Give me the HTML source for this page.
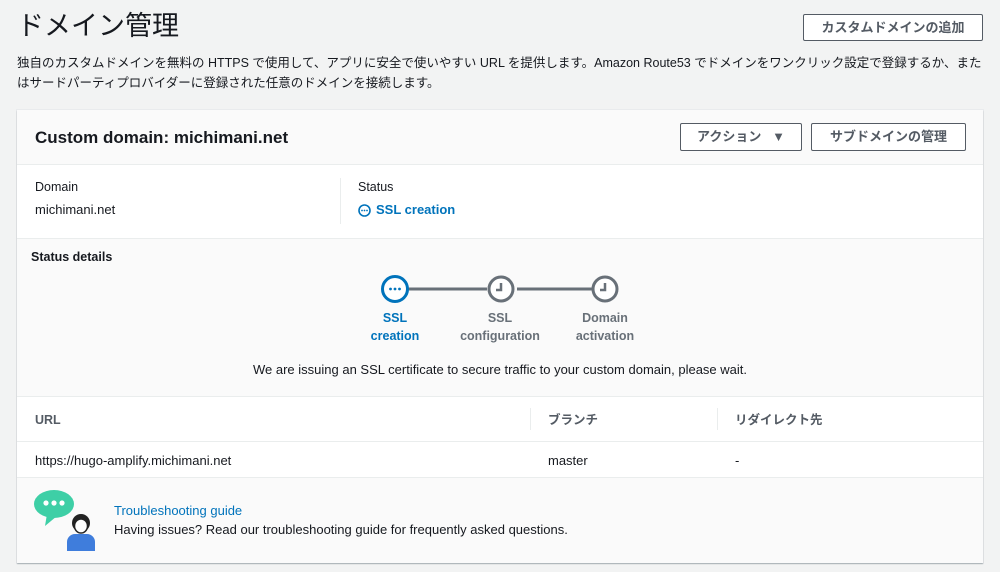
<!DOCTYPE html>
<html><head><meta charset="utf-8"><style>
*{box-sizing:border-box;margin:0;padding:0}
body{width:1000px;height:572px;background:#f2f3f3;font-family:"Liberation Sans","Noto Sans CJK JP",sans-serif;color:#16191f;position:relative;overflow:hidden}
.a{position:absolute}
.btn{position:absolute;border:1px solid #545b64;background:#fff;border-radius:2px;font-size:13px;font-weight:bold;color:#545b64;display:flex;align-items:center;justify-content:center;line-height:16px}
.t13{font-size:13px;line-height:16px}
.lbl{font-size:12.5px;color:#545b64;line-height:16px}
.th{font-size:12.5px;font-weight:bold;color:#545b64;line-height:16px;top:302px}
</style></head><body>
<div class="a" style="left:17px;top:8px;font-size:27px;line-height:36px;font-weight:400;color:#16191f">ドメイン管理</div>
<div class="btn" style="left:803px;top:14px;width:180px;height:27px">カスタムドメインの追加</div>
<div class="a" style="left:17px;top:53px;width:970px;font-size:12.5px;line-height:20px;color:#16191f">独自のカスタムドメインを無料の HTTPS で使用して、アプリに安全で使いやすい URL を提供します。Amazon Route53 でドメインをワンクリック設定で登録するか、またはサードパーティプロバイダーに登録された任意のドメインを接続します。</div>
<div class="a" style="left:17px;top:110px;width:966px;height:453px;background:#fff;box-shadow:0 1px 1px rgba(0,28,36,.3),0 0 0 1px #e9ebed">
 <div class="a" style="left:0;top:0;width:966px;height:55px;background:#fafafa;border-bottom:1px solid #eaeded"></div>
 <div class="a" style="left:18px;top:17px;font-size:17px;line-height:22px;font-weight:bold">Custom domain: michimani.net</div>
 <div class="btn" style="left:663px;top:13px;width:122px;height:28px">アクション&nbsp;&nbsp;&nbsp;▼</div>
 <div class="btn" style="left:794px;top:13px;width:155px;height:28px">サブドメインの管理</div>
 <div class="a lbl" style="left:18px;top:69px;color:#16191f">Domain</div>
 <div class="a t13" style="left:18px;top:92px">michimani.net</div>
 <div class="a" style="left:323px;top:68px;width:1px;height:46px;background:#eaeded"></div>
 <div class="a lbl" style="left:341px;top:69px;color:#16191f">Status</div>
 <div class="a t13" style="left:341px;top:92px;color:#0073bb;font-weight:bold;display:flex;align-items:center"><svg width="13" height="13" style="margin-right:5px"><circle cx="6.5" cy="6.5" r="5.5" fill="none" stroke="#0073bb" stroke-width="1.6"/><circle cx="4" cy="6.5" r=".9" fill="#0073bb"/><circle cx="6.5" cy="6.5" r=".9" fill="#0073bb"/><circle cx="9" cy="6.5" r=".9" fill="#0073bb"/></svg>SSL creation</div>
 <div class="a" style="left:0;top:128px;width:966px;height:159px;background:#fafafa;border-top:1px solid #eaeded;border-bottom:1px solid #eaeded"></div>
 <div class="a" style="left:14px;top:139px;font-size:12.5px;line-height:16px;font-weight:bold">Status details</div>
 <svg class="a" style="left:360px;top:163px" width="250" height="32">
  <line x1="31" y1="16" x2="110" y2="16" stroke="#687078" stroke-width="3"/>
  <line x1="140" y1="16" x2="215" y2="16" stroke="#687078" stroke-width="3"/>
  <circle cx="18" cy="16" r="12.5" fill="#fff" stroke="#0073bb" stroke-width="3"/>
  <circle cx="13.5" cy="16" r="1.4" fill="#0073bb"/><circle cx="18" cy="16" r="1.4" fill="#0073bb"/><circle cx="22.5" cy="16" r="1.4" fill="#0073bb"/>
  <circle cx="124" cy="16" r="12" fill="#fff" stroke="#687078" stroke-width="3"/>
  <path d="M124 10v7h-5" fill="none" stroke="#687078" stroke-width="2.5"/>
  <circle cx="228" cy="16" r="12" fill="#fff" stroke="#687078" stroke-width="3"/>
  <path d="M228 10v7h-5" fill="none" stroke="#687078" stroke-width="2.5"/>
 </svg>
 <div class="a" style="left:328px;top:199px;width:100px;text-align:center;font-size:12.5px;font-weight:bold;line-height:18px;color:#0073bb">SSL<br>creation</div>
 <div class="a" style="left:433px;top:199px;width:100px;text-align:center;font-size:12.5px;font-weight:bold;line-height:18px;color:#687078">SSL<br>configuration</div>
 <div class="a" style="left:538px;top:199px;width:100px;text-align:center;font-size:12.5px;font-weight:bold;line-height:18px;color:#687078">Domain<br>activation</div>
 <div class="a t13" style="left:0;top:252px;width:966px;text-align:center">We are issuing an SSL certificate to secure traffic to your custom domain, please wait.</div>
 <div class="a th" style="left:18px">URL</div>
 <div class="a" style="left:513px;top:298px;width:1px;height:22px;background:#eaeded"></div>
 <div class="a th" style="left:531px">ブランチ</div>
 <div class="a" style="left:700px;top:298px;width:1px;height:22px;background:#eaeded"></div>
 <div class="a th" style="left:718px">リダイレクト先</div>
 <div class="a" style="left:0;top:331px;width:966px;height:1px;background:#eaeded"></div>
 <div class="a t13" style="left:18px;top:343px">https://hugo-amplify.michimani.net</div>
 <div class="a t13" style="left:531px;top:343px">master</div>
 <div class="a t13" style="left:718px;top:343px">-</div>
 <div class="a" style="left:0;top:367px;width:966px;height:86px;background:#fafafa;border-top:1px solid #eaeded"></div>
 <svg class="a" style="left:16px;top:378px" width="66" height="64">
  <ellipse cx="21" cy="16" rx="20" ry="14" fill="#3ecfa6"/>
  <path d="M14 26 L12 38 L24 28Z" fill="#3ecfa6"/>
  <circle cx="13" cy="15" r="2.6" fill="#fff"/><circle cx="21" cy="15" r="2.6" fill="#fff"/><circle cx="29" cy="15" r="2.6" fill="#fff"/>
  <path d="M34 63v-9a8 8 0 0 1 8-8h12a8 8 0 0 1 8 8v9z" fill="#3f7ddc"/>
  <circle cx="48" cy="35" r="9" fill="#222"/>
  <ellipse cx="48" cy="38" rx="6.5" ry="7" fill="#fff" stroke="#222" stroke-width="1.5"/>
 </svg>
 <div class="a t13" style="left:97px;top:393px;color:#0073bb">Troubleshooting guide</div>
 <div class="a t13" style="left:97px;top:412px;color:#16191f">Having issues? Read our troubleshooting guide for frequently asked questions.</div>
</div>
</body></html>
